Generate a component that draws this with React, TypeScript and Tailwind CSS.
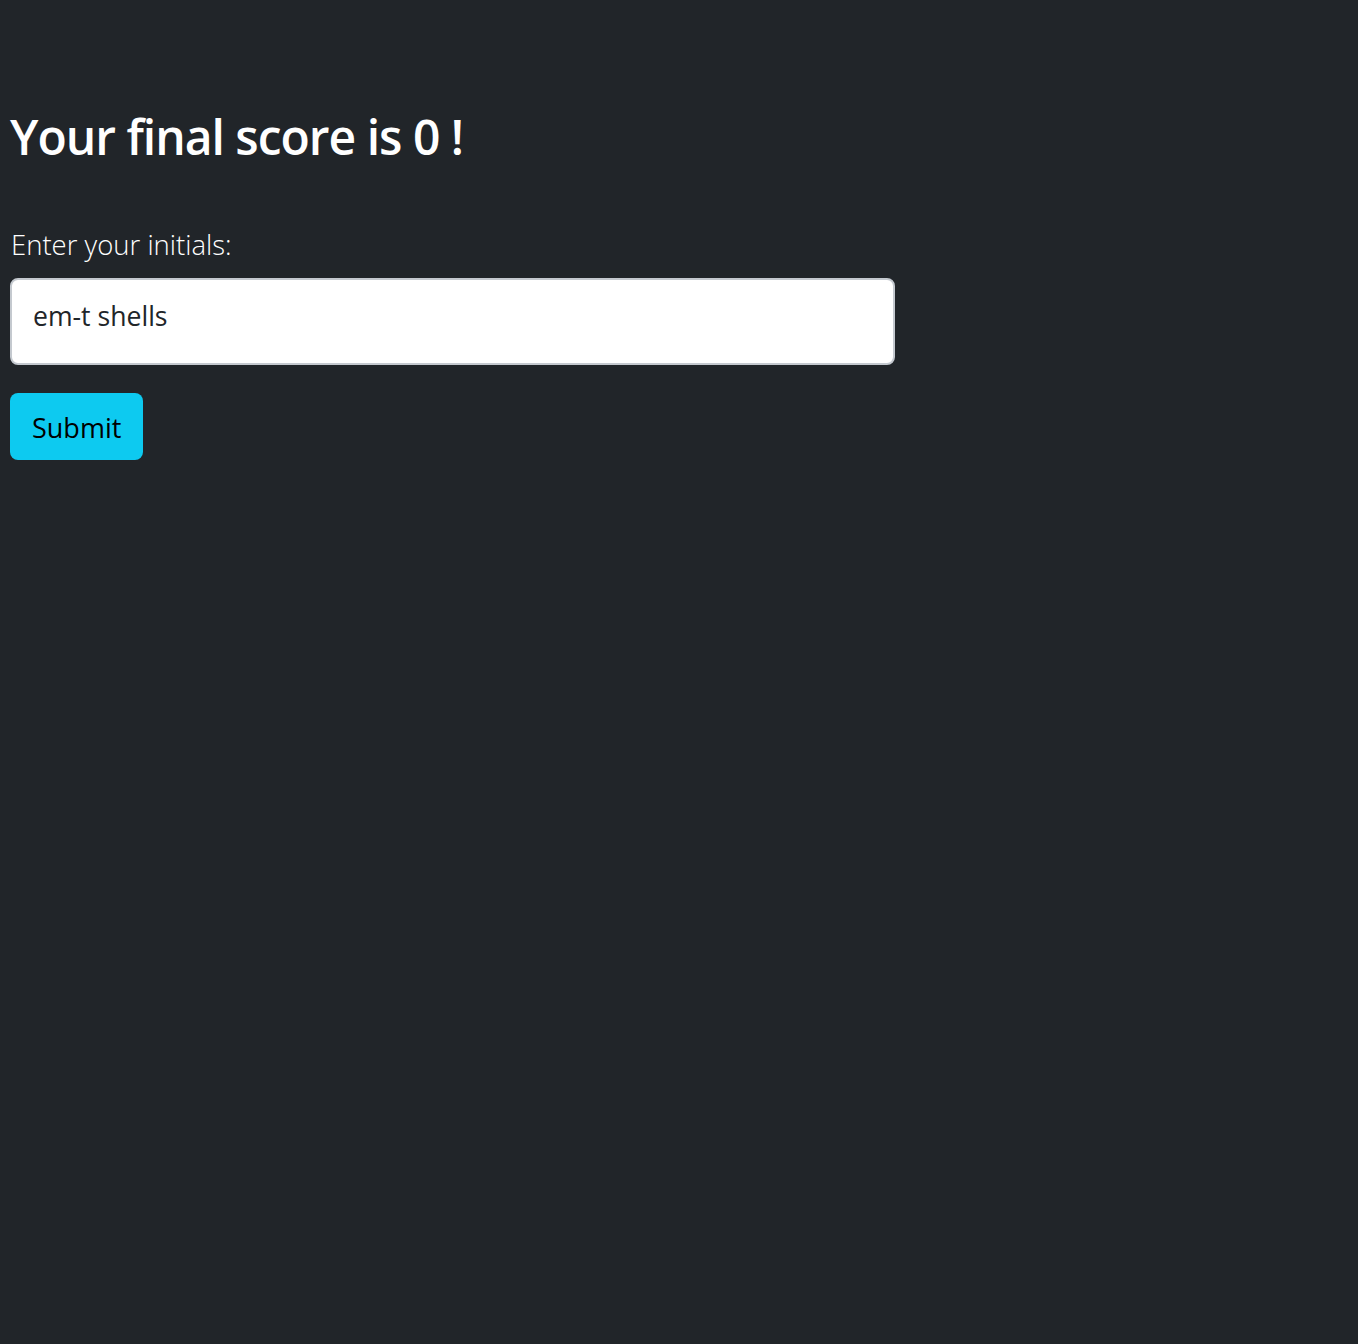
import React, { useState } from 'react';

const App: React.FC = () => {
  const [initials, setInitials] = useState('em-t shells');

  return (
    <div className="min-h-screen w-full bg-[#212529] text-white font-['Open_Sans',sans-serif]">
      <div className="px-[10px] pt-[108px]">
        <h1 className="text-[48px] leading-[1.2] font-semibold tracking-[-1px]">Your final score is 0 !</h1>

        <form className="mt-[58px] w-[885px]" onSubmit={(e) => e.preventDefault()}>
          <label htmlFor="initials" className="block text-[27.5px] leading-[1.5] font-light mb-[13px] pl-[1px]">
            Enter your initials:
          </label>
          <input
            id="initials"
            type="text"
            value={initials}
            onChange={(e) => setInitials(e.target.value)}
            className="block w-full h-[87px] rounded-[8px] border-2 border-[#c4c9cf] bg-white px-[21px] pb-[11px] text-[26.6px] text-[#212529] outline-none"
          />
          <button
            type="submit"
            className="mt-[28px] h-[67px] px-[22px] pt-[4px] rounded-[8px] bg-[#0dcaf0] text-[27px] text-black"
          >
            Submit
          </button>
        </form>
      </div>
    </div>
  );
};

export default App;
